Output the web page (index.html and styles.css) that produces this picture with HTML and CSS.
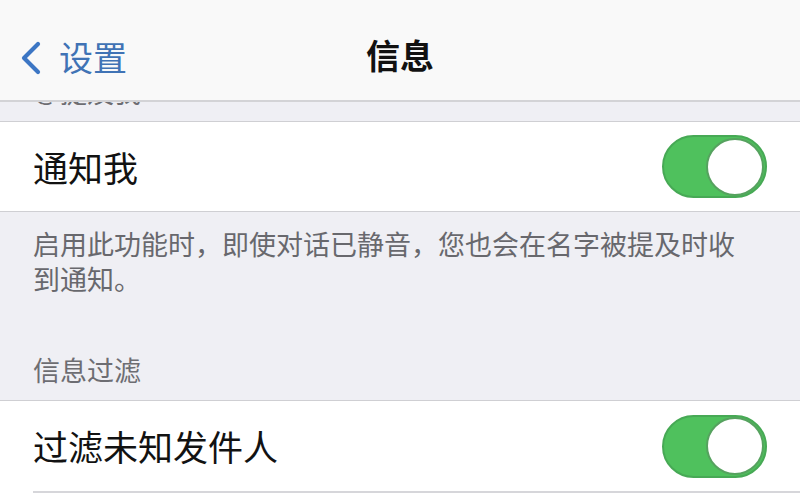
FILE: index.html
```html
<!DOCTYPE html>
<html lang="zh-CN">
<head>
<meta charset="utf-8">
<title>信息</title>
<link rel="stylesheet" href="styles.css">
</head>
<body>
<header class="nav">
  <div class="back">
    <svg class="chev" width="26" height="34" viewBox="0 0 26 34" aria-hidden="true">
      <path d="M21 3 L7 17 L21 31" fill="none" stroke="#3c76c4" stroke-width="4.2" stroke-linecap="round" stroke-linejoin="round"/>
    </svg>
    <span class="back-label">设置</span>
  </div>
  <div class="title">信息</div>
  <div class="spacer"></div>
</header>
<main class="page">
  <div class="group-header top">＠提及我</div>
  <div class="cell">
    <span class="label">通知我</span>
    <div class="switch"><div class="knob"></div></div>
  </div>
  <div class="group-footer">启用此功能时，即使对话已静音，您也会在名字被提及时收到通知。</div>
  <div class="group-header">信息过滤</div>
  <div class="group">
    <div class="cell last">
      <span class="label">过滤未知发件人</span>
      <div class="switch"><div class="knob"></div></div>
    </div>
    <div class="sep"></div>
    <div class="stub"></div>
  </div>
</main>
</body>
</html>
```
FILE: styles.css
```css
* { box-sizing: border-box; }
html, body {
  margin: 0;
  padding: 0;
  background: #efeff4;
  font-family: "Noto Sans CJK SC", "Noto Sans", sans-serif;
  overflow: hidden;
}
.nav {
  position: fixed;
  top: 0;
  left: 0;
  right: 0;
  height: 102px;
  padding-top: 10px;
  background: #f9f9f9;
  border-bottom: 2px solid #d3d3d6;
  display: grid;
  grid-template-columns: 1fr auto 1fr;
  align-items: center;
  z-index: 2;
}
.back {
  display: flex;
  align-items: center;
  padding-left: 17px;
  gap: 16px;
}
.chev { margin-top: 6px; }
.back-label {
  font-size: 34px;
  line-height: 40px;
  color: #4073b5;
  margin-top: 4px;
}
.title {
  font-size: 34px;
  line-height: 40px;
  font-weight: 600;
  color: #111;
}
.page {
  display: flex;
  flex-direction: column;
}
.group-header {
  padding: 56px 33px 13px;
  font-size: 27px;
  line-height: 35px;
  color: #6d6d72;
}
.group-header.top {
  height: 121px;
  padding: 0 33px 12px;
  display: flex;
  align-items: flex-end;
}
.cell {
  height: 91px;
  padding: 0 33px;
  background: #fff;
  border-top: 1px solid #cfcfd3;
  border-bottom: 1px solid #cfcfd3;
  display: flex;
  align-items: center;
  justify-content: space-between;
}
.cell.last {
  border-bottom: none;
  height: 91px;
}
.label {
  font-size: 35px;
  line-height: 42px;
  color: #121212;
}
.group-footer {
  padding: 14px 45px 0 33px;
  font-size: 27px;
  line-height: 35px;
  color: #68686d;
}
.group {
  background: #fff;
}
.sep {
  height: 2px;
  margin-left: 33px;
  background: #d6d6da;
}
.stub {
  height: 20px;
  background: #fff;
}
.switch {
  width: 105px;
  height: 63px;
  border-radius: 32px;
  background: #4fc15d;
  border: 2px solid #47a955;
  display: flex;
  justify-content: flex-end;
  align-items: center;
  padding-right: 1px;
}
.knob {
  width: 58px;
  height: 58px;
  border-radius: 50%;
  background: #fff;
  border: 2px solid #56a25f;
}
```
